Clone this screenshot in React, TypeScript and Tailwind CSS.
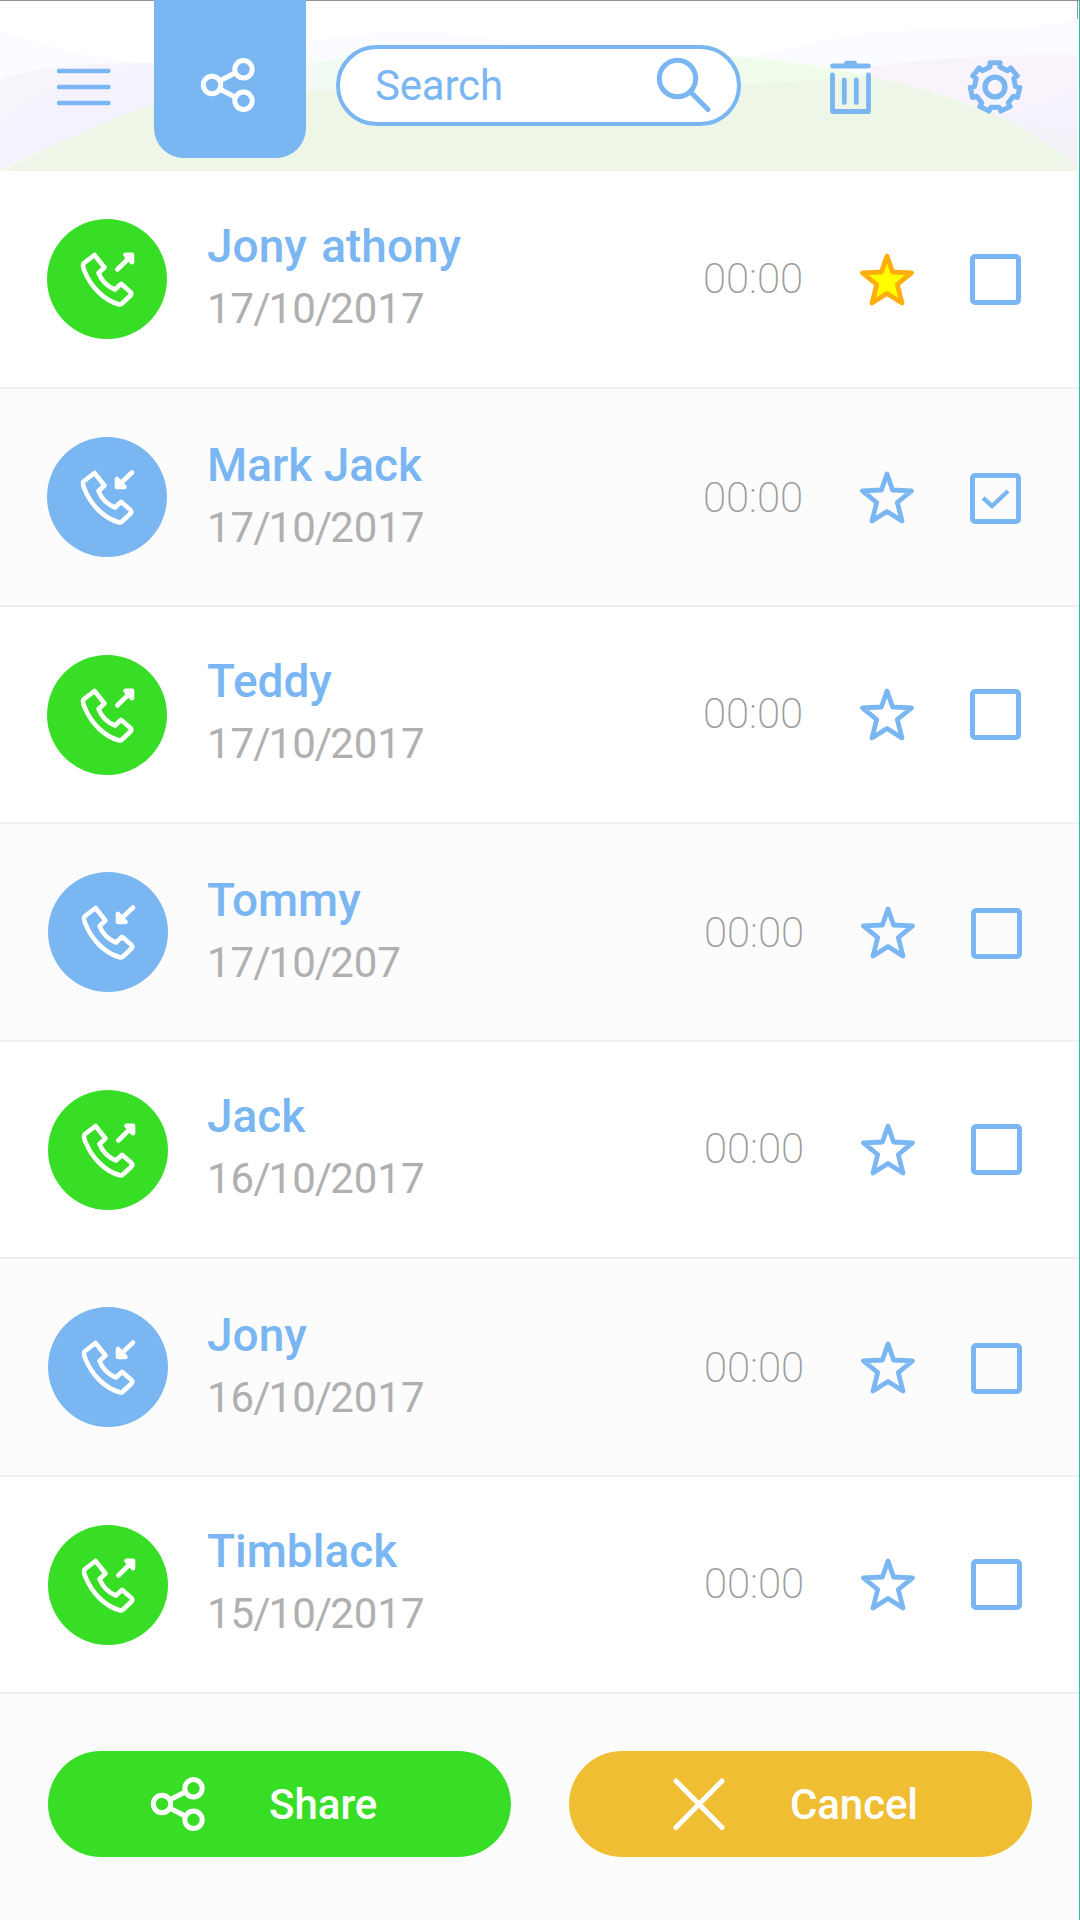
import clsx from 'clsx';

type Call = {
  name: string;
  date: string;
  incoming?: boolean;
  starred?: boolean;
  checked?: boolean;
  row: string;
  shift: string;
};

const calls: Call[] = [
  { name: 'Jony athony', date: '17/10/2017', starred: true, row: 'h-[218px] [word-spacing:3px]', shift: 'pt-px' },
  { name: 'Mark Jack', date: '17/10/2017', incoming: true, checked: true, row: 'h-[218px]', shift: 'pt-0.5' },
  { name: 'Teddy', date: '17/10/2017', row: 'h-[217px]', shift: 'pt-0' },
  { name: 'Tommy', date: '17/10/207', incoming: true, row: 'h-[218px]', shift: 'pt-0.5' },
  { name: 'Jack', date: '16/10/2017', row: 'h-[217px]', shift: 'pt-0' },
  { name: 'Jony', date: '16/10/2017', incoming: true, row: 'h-[218px]', shift: 'pt-0.5' },
  { name: 'Timblack', date: '15/10/2017', row: 'h-[217px]', shift: 'pt-0' },
];

// seven-toothed cog around 0,0
const gearPath = (() => {
  const point = (radius: number, deg: number) => {
    const a = ((deg - 90) * Math.PI) / 180;
    return `${(radius * Math.cos(a)).toFixed(2)} ${(radius * Math.sin(a)).toFixed(2)}`;
  };
  const points: string[] = [];
  for (let i = 0; i < 7; i++) {
    const mid = (i * 360) / 7;
    points.push(point(20.6, mid - 14), point(24.8, mid - 12), point(24.8, mid + 12), point(20.6, mid + 14));
  }
  return `M${points.join('L')}Z`;
})();

function HeaderWaves() {
  return (
    <svg className="absolute top-0 left-0" width="1080" height="170" viewBox="0 1 1080 170" fill="none">
      <path d="M0 32C50 45 90 61 160 63C230 60 320 33 410 32C500 33 600 62 700 60C780 58 810 38 880 32C950 26 1010 34 1077 20V171H0Z" fill="#fafcff" />
      <path d="M0 80C45 63 100 63 160 63V171H0Z" fill="#f8f4fc" />
      <path d="M0 128C30 90 80 78 160 66V171H0Z" fill="#f4f2fe" />
      <path d="M870 67C930 58 1000 54 1077 55V171H870Z" fill="#f9f4fc" />
      <path d="M960 120C1000 118 1045 108 1077 88V171H960Z" fill="#f4f2fe" />
      <path d="M0 171C60 140 105 122 154 104C220 80 380 50 500 48C680 49 790 58 860 74C960 95 1035 125 1077 168V171Z" fill="#effdea" />
      <path d="M306 63C350 58 400 50 450 50V92H306Z" fill="#f1fbf4" />
      <path d="M5 171C60 140 105 122 154 104C220 92 290 90 340 91C500 92 690 88 790 82C830 79 850 77 868 76C960 97 1035 125 1077 168V171Z" fill="#edf6e7" />
      <path d="M1020 121C1045 130 1060 132 1077 130V168C1062 148 1042 133 1020 121Z" fill="#f3f1f5" />
      <path d="M1077.500 1V19" stroke="#929292" />
    </svg>
  );
}

function MenuIcon() {
  return (
    <svg width="54" height="38" viewBox="0 0 54 38" stroke="#7ab6f2" strokeWidth="4.400" strokeLinecap="round">
      <path d="M2 3H51.500M2 19H51.500M2 35H51.500" />
    </svg>
  );
}

function ShareIcon() {
  return (
    <svg width="56" height="58" viewBox="0 0 56 58" fill="none" stroke="white" strokeWidth="5">
      <circle cx="12" cy="29" r="8.700" />
      <circle cx="43.500" cy="13.300" r="8.700" />
      <circle cx="43.500" cy="44.800" r="8.700" />
      <path d="M20 24.800L35.500 16.800M20 33.200L35.500 41.200" />
    </svg>
  );
}

function SearchIcon() {
  return (
    <svg width="56" height="58" viewBox="0 0 56 58" fill="none" stroke="#7ab6f2" strokeWidth="5" strokeLinecap="round">
      <circle cx="21.500" cy="21.500" r="18.200" />
      <path d="M35 35.500L52 52.500" />
    </svg>
  );
}

function TrashIcon() {
  return (
    <svg width="42" height="56" viewBox="0 0 42 56" fill="none" stroke="#7ab6f2" strokeWidth="4.800" strokeLinecap="round" strokeLinejoin="round">
      <path d="M2.500 7H38.500M16.500 4.200H24.500" />
      <path d="M2.500 16V52.500H38.500V16" />
      <path d="M14.300 21V43.500M26.300 21V43.500" />
    </svg>
  );
}

function GearIcon() {
  return (
    <svg width="56" height="56" viewBox="-28 -28 56 56" fill="none" stroke="#7ab6f2" strokeWidth="5" strokeLinejoin="round">
      <path d={gearPath} />
      <circle r="9.900" strokeWidth="5.400" />
    </svg>
  );
}

function PhoneIcon({ incoming }: { incoming?: boolean }) {
  return (
    <svg width="80" height="80" viewBox="-3 -1 80 80" fill="none" stroke="white" strokeWidth="4.600" strokeLinecap="round" strokeLinejoin="round">
      <path d="M24.500 15L13.500 23.500C12.500 25 13.200 28 14.500 31C21 47 34 60.500 49.500 64.500Q51 64.500 52 63.500L60.500 55.500Q62 53.800 60.500 52L51 43.800L45 49.500C37.500 46.500 31.500 40.500 28.500 33L34.500 27.500Z" />
      {incoming ? (
        <>
          <path d="M62 14.500L50 26" />
          <path d="M47 21V29H54.500Z" fill="white" />
        </>
      ) : (
        <>
          <path d="M47.300 29.500L60 17" />
          <path d="M55.500 14.800H62V22.300Z" fill="white" />
        </>
      )}
    </svg>
  );
}

function Star({ filled }: { filled?: boolean }) {
  return (
    <svg
      className={filled ? 'fill-[#ffff00] stroke-[#ffae0d]' : 'fill-none stroke-[#7ab6f2]'}
      width="54"
      height="54"
      viewBox="0 0 54 54"
      strokeWidth="4.800"
      strokeLinejoin="round"
    >
      <path d="M27 3L32.600 19L51.500 19.800L37.300 31.500L42 50L27 40.500L12 50L16.700 31.500L2.500 19.800L21.400 19Z" />
    </svg>
  );
}

function Checkbox({ checked }: { checked?: boolean }) {
  return (
    <div className="flex h-[51px] w-[51px] items-center justify-center rounded-[5px] border-5 border-[#7ab6f2]">
      {checked && (
        <svg width="28" height="22" viewBox="0 0 28 22" fill="none" stroke="#7ab6f2" strokeWidth="4.400">
          <path d="M1 10L10 18L26 3" />
        </svg>
      )}
    </div>
  );
}

function DateText({ value }: { value: string }) {
  const [day, month, year] = value.split('/');
  const slash = <span className="-mr-0.5 -ml-px">/</span>;
  return (
    <p className="text-[42px] leading-[70px] text-[#b0b0b0]">
      {day}
      {slash}
      {month}
      {slash}
      {year}
    </p>
  );
}

function CallRow({ call, index }: { call: Call; index: number }) {
  const late = index > 2;
  const raised = index > 0 && index % 2 === 0;
  return (
    <li className={clsx('flex items-start border-b-2 border-[#efefef] pt-[46px]', call.row, index % 2 ? 'bg-[#fcfcfc]' : 'bg-white')}>
      <div className={clsx('w-[207px] shrink-0', late ? 'pl-12' : 'pl-[47px]', raised ? 'pt-[1.5px]' : 'pt-0.5')}>
        <div className={clsx('flex h-[120px] w-[120px] items-center justify-center rounded-full', call.incoming ? 'bg-[#7ab6f2]' : 'bg-[#38de26]')}>
          <PhoneIcon incoming={call.incoming} />
        </div>
      </div>
      <div className={clsx('shrink-0', call.shift, late ? 'w-[497px]' : 'w-[496px]')}>
        <h2 className="text-[46px] leading-[56px] font-medium text-[#7ab6f2]">{call.name}</h2>
        <DateText value={call.date} />
      </div>
      <div className={clsx('w-[157px] shrink-0', call.shift)}>
        <span className="mt-[37px] block text-[42px] leading-[48px] font-extralight tracking-[-0.1px] text-[#9c9c9c]">00:00</span>
      </div>
      <div className={clsx('w-[110px] shrink-0', raised ? 'pt-[35px]' : 'pt-9')}>
        <Star filled={call.starred} />
      </div>
      <div className={call.shift}>
        <div className="mt-9">
          <Checkbox checked={call.checked} />
        </div>
      </div>
    </li>
  );
}

export default function App() {
  return (
    <main className="relative flex h-[1920px] w-[1080px] flex-col overflow-hidden bg-white font-['Roboto',sans-serif]">
      <header className="relative h-[171px] shrink-0 border-t border-[#929292]">
        <HeaderWaves />
        <div className="relative flex items-start">
          <button className="mt-[67px] ml-[56.5px]">
            <MenuIcon />
          </button>
          <button className="-mt-px ml-[43.5px] flex h-[158px] w-[152px] justify-center rounded-b-[30px] bg-[#7ab6f2] pt-14 pr-1">
            <ShareIcon />
          </button>
          <label className="mt-11 ml-[30px] flex h-[81px] w-[405px] items-center justify-between rounded-full border-4 border-[#7ab6f2] bg-white pr-[25px] pl-[35px]">
            <span className="text-[42px] leading-[50px] tracking-[-0.2px] text-[#7ab6f2]">Search</span>
            <SearchIcon />
          </label>
          <button className="mt-[58px] ml-[89px]">
            <TrashIcon />
          </button>
          <button className="mt-[58px] ml-[95px]">
            <GearIcon />
          </button>
        </div>
      </header>

      <ul>
        {calls.map((call, i) => (
          <CallRow key={i} call={call} index={i} />
        ))}
      </ul>

      <footer className="flex flex-1 items-start gap-[58px] bg-[#fcfcfc] pt-[57px] pl-12">
        <button className="flex h-[106px] w-[463px] items-center rounded-full bg-[#38de26] pl-[102px] text-[42px] font-medium text-white">
          <ShareIcon />
          <span className="ml-[63px]">Share</span>
        </button>
        <button className="flex h-[106px] w-[463px] items-center rounded-full bg-[#f0be33] pl-[103px] text-[42px] font-medium text-white">
          <svg width="54" height="54" viewBox="0 0 54 54" stroke="white" strokeWidth="5" strokeLinecap="round">
            <path d="M4 4L50 50.500M50 4L4 50.500" />
          </svg>
          <span className="ml-[64px] tracking-[-0.1px]">Cancel</span>
        </button>
      </footer>

      {/* right edge of the screen */}
      <div className="absolute inset-y-0 right-0 w-px bg-[#35b5ad]" />
    </main>
  );
}
